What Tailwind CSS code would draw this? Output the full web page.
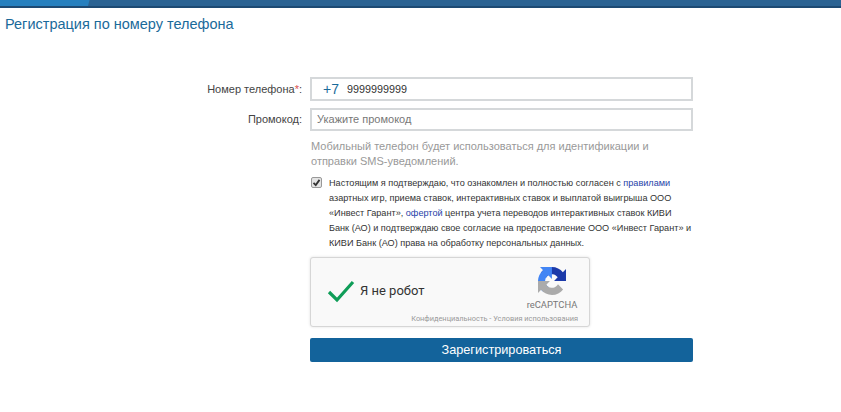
<!DOCTYPE html>
<html lang="ru">
<head>
    <meta charset="UTF-8">
    <title>Регистрация по номеру телефона</title>
    <script src="https://cdn.jsdelivr.net/npm/@tailwindcss/browser@4"></script>
</head>
<body class="bg-white font-['Liberation_Sans',sans-serif] text-[#333]">
    <!-- top bar -->
    <div class="h-[8px] border-b-2 border-[#1d4a73] bg-[linear-gradient(105deg,#2680bf_0,#2680bf_86px,#2b6393_87px)]"></div>

    <h1 class="pl-[5px] pt-[6px] text-[14.5px] leading-[20px] text-[#1a6a9a]">Регистрация по номеру телефона</h1>

    <form class="mt-[43px] flex flex-col">
        <!-- phone -->
        <div class="flex items-center">
            <label class="w-[302px] text-right text-[11px] text-[#444]">Номер телефона<span class="text-[#d9534f]">*</span>:</label>
            <div class="ml-[8px] flex h-[24px] w-[383px] items-center border-2 border-[#d5d8da] bg-white pl-[11px]">
                <span class="w-[24px] text-[14px] text-[#1a6a9a]">+7</span>
                <span class="text-[10.8px] text-[#333]">9999999999</span>
            </div>
        </div>
        <!-- promo -->
        <div class="mt-[7px] flex items-center">
            <label class="w-[302px] text-right text-[11px] text-[#444]">Промокод:</label>
            <div class="ml-[8px] flex h-[23px] w-[383px] items-center border-2 border-[#d5d8da] bg-white pl-[5px] text-[11px] text-[#777]">Укажите промокод</div>
        </div>

        <div class="ml-[310px] w-[383px]">
            <p class="mt-[8px] pl-[1px] text-[11px] leading-[15px] text-[#999]">Мобильный телефон будет использоваться для идентификации и<br>отправки SMS-уведомлений.</p>

            <!-- agreement -->
            <div class="mt-[7px] flex">
                <div class="ml-[1px] mt-[1px] flex h-[11px] w-[11px] shrink-0 items-center justify-center rounded-[2px] border border-[#999] bg-[#e4e4e4]">
                    <svg viewBox="0 0 12 12" class="h-[9px] w-[9px]"><path d="M2 6.5 L5 9.5 L10 2.5" fill="none" stroke="#333" stroke-width="2.4"/></svg>
                </div>
                <p class="ml-[7px] text-[9.15px] leading-[15px] text-[#333]">Настоящим я подтверждаю, что ознакомлен и полностью согласен с <a href="#" class="text-[#1f3fa8]">правилами</a> азартных игр, приема ставок, интерактивных ставок и выплатой выигрыша ООО «Инвест Гарант», <a href="#" class="text-[#1f3fa8]">офертой</a> центра учета переводов интерактивных ставок КИВИ Банк (АО) и подтверждаю свое согласие на предоставление ООО «Инвест Гарант» и КИВИ Банк (АО) права на обработку персональных данных.</p>
            </div>

            <!-- recaptcha -->
            <div class="relative mt-[6px] h-[70px] w-[280px] rounded-[3px] border border-[#d6d6d6] bg-[#f9f9f9] font-['Roboto',sans-serif] shadow-[0_0_3px_rgba(0,0,0,0.12)]">
                <div class="flex h-full items-center pb-[3px] pl-[16px]">
                    <svg viewBox="0 0 28 24" class="h-[24px] w-[28px]"><path d="M2 13 L10 21 L26 3" fill="none" stroke="#0f9d58" stroke-width="3.2"/></svg>
                    <span class="ml-[5px] text-[13px] text-[#333]">Я не робот</span>
                </div>
                <div class="absolute right-[11px] top-[9px] flex w-[52px] flex-col items-center">
                    <svg viewBox="0 0 64 64" class="h-[28px] w-[28px]">
                        <path d="M64 31.955l-.033-1.37V4.687l-7.16 7.16C50.948 4.674 42.033.093 32.05.093c-10.4 0-19.622 4.96-25.458 12.64l11.736 11.86a15.55 15.55 0 0 1 4.754-5.334c2.05-1.6 4.952-2.906 8.968-2.906.485 0 .86.057 1.135.163 4.976.393 9.29 3.14 11.83 7.125l-8.307 8.307 32.29.007" fill="#1c3aa9"/>
                        <path d="M31.862.001l-1.37.033H4.594l7.16 7.16C4.58 13.053 0 21.968 0 31.95c0 10.4 4.96 19.622 12.64 25.458l11.86-11.736a15.55 15.55 0 0 1-5.334-4.754c-1.6-2.05-2.906-4.952-2.906-8.968 0-.485.057-.86.163-1.135.393-4.976 3.14-9.29 7.125-11.83l8.307 8.307.007-32.29" fill="#4285f4"/>
                        <path d="M.001 32l.033 1.37v25.898l7.16-7.16c5.86 7.173 14.774 11.754 24.76 11.754 10.4 0 19.622-4.96 25.458-12.64l-11.736-11.86a15.55 15.55 0 0 1-4.754 5.334c-2.05 1.6-4.952 2.906-8.968 2.906-.485 0-.86-.057-1.135-.163-4.976-.393-9.29-3.14-11.83-7.125l8.307-8.307-32.29-.007" fill="#ababab"/>
                    </svg>
                    <span class="mt-[4px] text-[9.4px] leading-[11px] text-[#777]">reCAPTCHA</span>
                </div>
                <div class="absolute bottom-[3px] right-[11px] whitespace-nowrap text-[7.4px] leading-[9px] text-[#999]">Конфиденциальность - Условия использования</div>
            </div>

            <button type="button" class="mt-[11px] h-[24px] w-[383px] rounded-[2px] bg-[#13639b] pt-[1px] text-[12.7px] text-white">Зарегистрироваться</button>
        </div>
    </form>
</body>
</html>
